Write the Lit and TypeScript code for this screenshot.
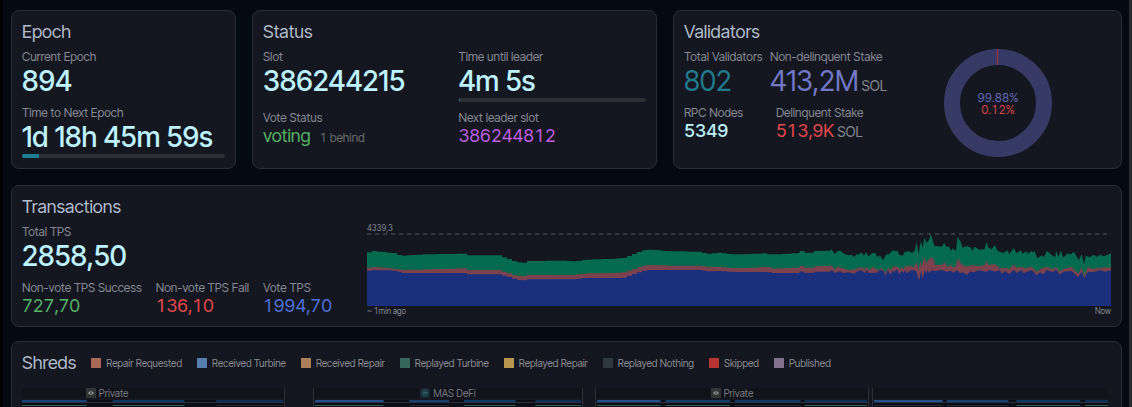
import { LitElement, html, css, svg } from "lit";
import { customElement, property } from "lit/decorators.js";

type Point = [number, number];

/* Upper outlines of the stacked TPS layers on a 2232 x 216 canvas. */
const parse = (text: string): Point[] =>
  text.trim().split(/\s+/).map((p) => p.split(",").map(Number) as Point);

const SUCCESS = parse(`
0,58 17,51 84,57 104,66 179,61 294,59 299,64 397,64 449,83 471,88 477,81 591,80 634,83 644,78 769,73 839,46 909,52
1009,53 1015,59 1054,58 1064,51 1075,60 1119,61 1204,58 1209,62 1269,59 1297,56 1299,51 1311,51 1314,56 1339,56
1342,51 1389,50 1393,45 1403,60 1412,51 1421,51 1431,59 1444,64 1454,62 1461,69 1469,61 1477,61 1483,55 1491,65
1497,53 1504,67 1517,57 1524,56 1532,70 1539,64 1548,78 1559,60 1564,62 1579,48 1586,52 1591,50 1597,62 1607,65
1614,53 1629,52 1634,58 1643,50 1649,25 1655,61 1661,21 1667,41 1672,11 1679,26 1686,18 1691,0 1696,15 1702,35
1724,38 1732,26 1739,40 1745,36 1752,50 1757,43 1767,51 1771,8 1781,23 1787,41 1799,36 1812,41 1815,50 1824,38
1837,47 1853,46 1858,23 1865,41 1874,46 1883,33 1892,51 1909,57 1921,49 1927,60 1940,42 1949,58 1961,49 1967,59
1977,52 1984,59 1994,50 1999,56 2003,50 2011,73 2024,64 2031,70 2039,50 2059,67 2065,68 2067,50 2075,68 2081,49
2089,71 2102,58 2109,62 2121,53 2135,78 2144,61 2152,91 2156,65 2169,70 2179,62 2189,68 2199,62 2211,67 2232,58`);

const FAIL = parse(`
0,103 17,98 89,105 107,108 294,103 299,108 399,108 447,124 469,128 479,122 634,123 641,119 769,116 837,93 919,95
1009,95 1015,99 1059,99 1065,95 1075,101 1119,102 1207,99 1209,104 1296,101 1299,96 1311,96 1313,101 1341,101
1345,97 1389,96 1394,93 1403,107 1412,98 1429,103 1444,109 1464,106 1483,99 1494,107 1497,97 1507,108 1519,99
1534,109 1544,103 1556,115 1564,101 1571,108 1579,97 1594,99 1599,107 1604,99 1609,105 1615,97 1634,95 1639,100
1644,93 1649,83 1655,108 1660,81 1664,96 1672,68 1679,88 1686,75 1692,71 1699,73 1705,93 1724,93 1733,84 1742,99
1752,91 1757,101 1767,95 1771,73 1784,91 1799,98 1815,93 1834,96 1853,93 1858,81 1865,93 1883,90 1899,103 1914,101
1929,105 1940,91 1949,101 1964,99 1974,103 1994,98 2009,113 2024,103 2039,99 2059,106 2067,98 2078,113 2089,105
2114,99 2134,119 2144,100 2152,125 2162,99 2179,105 2199,101 2232,100`);

const VOTE = parse(`
0,111 17,108 89,110 107,117 294,117 299,121 399,121 447,135 469,141 479,136 634,136 641,132 769,132 837,108
1009,108 1015,112 1054,112 1065,108 1075,113 1119,114 1207,114 1209,117 1296,117 1299,112 1311,113 1313,117
1341,116 1344,113 1389,113 1394,108 1404,117 1419,111 1429,118 1444,115 1462,119 1469,113 1483,108 1494,118
1499,108 1505,117 1529,116 1539,108 1549,111 1556,125 1562,108 1570,122 1577,110 1582,114 1589,105 1597,121
1604,111 1609,117 1615,108 1619,118 1634,108 1647,111 1657,139 1662,111 1667,136 1673,108 1677,118 1682,109
1687,118 1694,109 1704,111 1724,108 1739,113 1752,110 1759,116 1771,109 1779,118 1789,115 1799,123 1809,113
1821,115 1834,109 1857,113 1869,108 1884,113 1899,108 1904,120 1914,111 1927,121 1940,107 1949,117 1964,108
1969,118 1994,108 2009,124 2019,115 2029,121 2039,108 2059,115 2067,106 2078,123 2089,113 2114,111 2133,130
2144,113 2152,133 2162,113 2179,115 2199,109 2214,113 2232,109`);

/* Older samples are coarse: they are drawn as steps, the recent ones as a line. */
const STEP = 15;
const STEPS_END = 1290;

const valueAt = (points: Point[], x: number): number => {
  const i = Math.max(1, points.findIndex((p) => p[0] >= x));
  const [x0, y0] = points[i - 1];
  const [x1, y1] = points[i];
  return Math.round(y0 + ((y1 - y0) * (x - x0)) / (x1 - x0));
};

const area = (points: Point[]) => {
  let path = "M0,216";
  for (let x = 0; x < STEPS_END; x += STEP) {
    path += ` V${valueAt(points, x + STEP / 2)} H${x + STEP}`;
  }
  const recent = points.filter((p) => p[0] > STEPS_END);
  return `${path} L${recent.map((p) => p.join(",")).join(" ")} V216 Z`;
};

const LEGEND = [
  ["Repair Requested", "#a9685a"],
  ["Received Turbine", "#557fae"],
  ["Received Repair", "#ab8059"],
  ["Replayed Turbine", "#36685a"],
  ["Replayed Repair", "#b7964e"],
  ["Replayed Nothing", "#2f3742"],
  ["Skipped", "#b63534"],
  ["Published", "#84728d"],
];

interface Lane { start: number; end: number; received: string; replayed: string }
interface Group { start: number; end: number; name: string; kind: string; lanes: Lane[] }

const lane = (start: number, end: number, received: string, replayed: string): Lane => ({ start, end, received, replayed });
const GREEN = "#2f6355";
const GREY = "#252b36";

const GROUPS: Group[] = [
  { start: 0, end: 263, name: "Private", kind: "private", lanes: [
    lane(0, 65, "#16437a", GREEN), lane(91, 163, "#0d3764", GREEN), lane(195, 262, "#0b2f59", GREY)] },
  { start: 291, end: 561, name: "MAS DeFi", kind: "mas", lanes: [
    lane(1, 70, "#22508d", GREEN), lane(96, 136, "#17406f", GREY), lane(151, 203, "#103a69", GREEN), lane(223, 269, "#0b2f59", GREEN)] },
  { start: 573, end: 847, name: "Private", kind: "private", lanes: [
    lane(1, 65, "#22508d", GREEN), lane(70, 135, "#123f72", GREEN), lane(140, 206, "#103a69", GREY), lane(210, 273, "#0b2f59", GREEN)] },
  { start: 850, end: 1086, name: "", kind: "", lanes: [
    lane(1, 70, "#22508d", GREY), lane(74, 136, "#17406f", GREY), lane(144, 208, "#0d3764", GREEN), lane(213, 236, "#0b2f59", GREEN)] },
];

@customElement("stat-item")
export class StatItem extends LitElement {
  @property() label = "";
  @property() value = "";
  @property() tone = "primary";
  @property() size = "large";
  @property() note = "";

  static styles = css`
    :host { display: block; min-width: 0; white-space: nowrap; }
    .label { font-size: 12px; line-height: 16px; color: #868993; }
    .value { display: flex; align-items: baseline; gap: 3px; }
    .large { font-size: 28px; line-height: 32px; }
    .large .primary { font-weight: 500; }
    .small { font-size: 18px; line-height: 20px; font-variant-numeric: tabular-nums; }
    .medium { font-size: 18px; line-height: 20px; font-weight: 500; font-variant-numeric: tabular-nums; }
    .note { font-size: 14px; line-height: 16px; color: #868993; }
    .primary { color: #bdf3ff; }
    .teal { color: #217a8d; }
    .indigo { color: #7277c6; }
    .red { color: #e5484d; }
    .green { color: #55b467; }
    .blue { color: #4f72d9; }
    .purple { color: #bf5fe0; }
    .green + .note { margin-left: 6px; font-size: 12px; color: #686d6c; }
  `;

  render() {
    return html`
      <div class="label">${this.label}</div>
      <div class="value ${this.size}">
        <span class=${this.tone}>${this.value}</span>
        ${this.note ? html`<span class="note">${this.note}</span>` : ""}
      </div>`;
  }
}

@customElement("app-root")
export class AppRoot extends LitElement {
  static styles = css`
    :host {
      display: block;
      box-sizing: border-box;
      height: 100vh;
      overflow: hidden;
      padding: 10px 7px 0 8px;
      border-left: 3px solid #000;
      border-right: 3px solid #292a2b;
      background: #050a12;
      font-family: "Inter Tight", Inter, "Liberation Sans", sans-serif;
      color: #b2bccb;
    }
    .summary { display: grid; grid-template-columns: 225fr 405fr 449fr; gap: 16px; }
    .card {
      box-sizing: border-box;
      min-width: 0;
      padding: 10px;
      border: 1px solid #2b2d35;
      border-radius: 8px;
      background: #14171f;
    }
    .transactions { display: flex; gap: 8px; margin-top: 16px; }
    .shreds { margin-top: 14px; padding-right: 13px; }
    h2 { margin: 0; font-size: 18px; line-height: 22px; font-weight: 400; color: #b2bccb; }
    .stack { display: flex; flex-direction: column; gap: 8px; margin-top: 6px; }
    .halves { display: grid; grid-template-columns: 1fr 1fr; gap: 8px; }
    .row { display: flex; gap: 8px; }
    .first { flex: 0 0 78px; }
    .first-wide { flex: 0 0 84px; }
    .trio { display: flex; gap: 14px; }
    progress {
      display: block;
      box-sizing: border-box;
      width: 100%;
      height: 4px;
      margin-top: 1px;
      border: 0;
      border-radius: 2px;
      overflow: hidden;
      appearance: none;
      background: #2d3133;
    }
    progress::-webkit-progress-bar { background: #2d3133; }
    progress::-webkit-progress-value { background: #1d7e92; }
    .validators { display: flex; }
    .figures { flex: 0 0 61%; }
    .donut { display: block; width: 108px; height: 108px; margin-top: 28px; }
    .donut text { font-size: 12px; text-anchor: middle; font-variant-numeric: tabular-nums; }
    .totals { flex: 0 0 337px; }
    .chart {
      flex: 1;
      min-width: 0;
      display: flex;
      flex-direction: column;
      justify-content: flex-end;
      font-size: 8px;
      line-height: 10px;
      color: #868993;
    }
    .peak { border-bottom: 1px solid transparent; font-variant-numeric: tabular-nums; }
    .plot { display: block; width: 100%; height: 72px; overflow: visible; }
    .axis { display: flex; justify-content: space-between; font-variant-numeric: tabular-nums; }
    .legend-row { display: flex; align-items: center; gap: 15px; }
    .legend { display: flex; gap: 15px; margin: 0; padding: 0; list-style: none; }
    .entry { display: flex; align-items: center; gap: 5px; font-size: 10px; line-height: 16px; color: #8b8d92; white-space: nowrap; }
    .swatch { width: 10px; height: 10px; }
    .strip { display: flex; margin-top: 14px; }
    .group {
      box-sizing: border-box;
      min-width: 0;
      border: solid #2b303b;
      border-width: 0 1px;
    }
    .group:first-child { border-left: 0; }
    .group:last-child { border-right: 0; }
    .group:first-child .owner { padding-right: 35%; }
    .owner {
      display: flex;
      justify-content: center;
      gap: 3px;
      height: 10px;
      margin-bottom: 2px;
      background: #101319;
      font-size: 10px;
      line-height: 11px;
      color: #777980;
    }
    .icon { width: 10px; height: 10px; }
    .lanes { display: block; width: 100%; height: 7px; background: #0b0e16; }
  `;

  private icon(kind: string) {
    if (kind === "private") {
      return html`<svg class="icon" viewBox="0 0 10 10" aria-hidden="true">
        <rect width="10" height="10" fill="#343434" />
        <path d="M2 5Q5 1.6 8 5Q5 8.4 2 5Z" fill="#9a9a9a" />
        <circle cx="5" cy="5" r="1" fill="#444" />
      </svg>`;
    }
    return html`<svg class="icon" viewBox="0 0 10 10" aria-hidden="true">
      <rect width="10" height="10" rx="1" fill="#16262d" />
      <circle cx="5" cy="5" r="3.4" fill="#1d4148" stroke="#285059" stroke-dasharray="1 1" />
      <path d="M3.4 5.6 4.6 4l1.8.4L5.5 6.2" fill="none" stroke="#39717a" stroke-width=".8" />
    </svg>`;
  }

  private group(g: Group, i: number) {
    const width = g.end - g.start;
    const gap = i ? g.start - GROUPS[i - 1].end : 0;
    const total = GROUPS[GROUPS.length - 1].end;
    return html`<div class="group" style="width:${(width / total) * 100}%;margin-left:${(gap / total) * 100}%">
      <div class="owner">${g.name ? html`${this.icon(g.kind)}<span>${g.name}</span>` : ""}</div>
      <svg class="lanes" viewBox="0 0 ${width} 7" preserveAspectRatio="none" aria-hidden="true">
        <rect y="2" width=${width} height="1" fill="#2b303b" />
        ${g.lanes.map((l) => svg`
          <rect x=${l.start} width=${l.end - l.start} height="2" fill=${l.received} />
          <rect x=${l.start} y="5" width=${l.end - l.start} height="1" fill=${l.replayed} />`)}
      </svg>
    </div>`;
  }

  render() {
    return html`
      <div class="summary">
        <section class="card">
          <h2>Epoch</h2>
          <div class="stack">
            <stat-item label="Current Epoch" value="894"></stat-item>
            <div>
              <stat-item label="Time to Next Epoch" value="1d 18h 45m 59s"></stat-item>
              <progress max="100" value="8.4" aria-label="Epoch progress"></progress>
            </div>
          </div>
        </section>
        <section class="card">
          <h2>Status</h2>
          <div class="stack">
            <div class="halves">
              <stat-item label="Slot" value="386244215"></stat-item>
              <div>
                <stat-item label="Time until leader" value="4m 5s"></stat-item>
                <progress max="100" value="1" aria-label="Progress to leader slot"></progress>
              </div>
            </div>
            <div class="halves">
              <stat-item label="Vote Status" value="voting" tone="green" size="small" note="1 behind"></stat-item>
              <stat-item label="Next leader slot" value="386244812" tone="purple" size="small"></stat-item>
            </div>
          </div>
        </section>
        <section class="card validators">
          <div class="figures">
            <h2>Validators</h2>
            <div class="stack">
              <div class="row">
                <stat-item class="first" label="Total Validators" value="802" tone="teal"></stat-item>
                <stat-item label="Non-delinquent Stake" value="413,2M" tone="indigo" note="SOL"></stat-item>
              </div>
              <div class="row">
                <stat-item class="first-wide" label="RPC Nodes" value="5349" size="medium"></stat-item>
                <stat-item label="Delinquent Stake" value="513,9K" tone="red" size="small" note="SOL"></stat-item>
              </div>
            </div>
          </div>
          <svg class="donut" viewBox="0 0 108 108" role="img" aria-label="Stake share">
            <circle cx="54" cy="54" r="46" fill="none" stroke="#373a64" stroke-width="16" />
            <path d="M53.5 0V16" stroke="#a03340" stroke-width="1.2" />
            <text x="54" y="53" fill="#6368b0">99.88%</text>
            <text x="54" y="65" fill="#d4444a">0.12%</text>
          </svg>
        </section>
      </div>

      <section class="card transactions">
        <div class="totals">
          <h2>Transactions</h2>
          <div class="stack">
            <stat-item label="Total TPS" value="2858,50"></stat-item>
            <div class="trio">
              <stat-item label="Non-vote TPS Success" value="727,70" tone="green" size="small"></stat-item>
              <stat-item label="Non-vote TPS Fail" value="136,10" tone="red" size="small"></stat-item>
              <stat-item label="Vote TPS" value="1994,70" tone="blue" size="small"></stat-item>
            </div>
          </div>
        </div>
        <div class="chart">
          <div class="peak">4339,3</div>
          <svg class="plot" viewBox="0 0 2232 216" preserveAspectRatio="none" role="img" aria-label="Transactions per second">
            <path d="M0,0 H2232" stroke="#41444c" stroke-width="4" stroke-dasharray="12 12" />
            <path d=${area(SUCCESS)} fill="#046a50" />
            <path d=${area(FAIL)} fill="#7b414d" />
            <path d=${area(VOTE)} fill="#1a307d" />
          </svg>
          <div class="axis"><span>~ 1min ago</span><span>Now</span></div>
        </div>
      </section>

      <section class="card shreds">
        <div class="legend-row">
          <h2>Shreds</h2>
          <ul class="legend">
            ${LEGEND.map(([name, color]) => html`
              <li class="entry"><span class="swatch" style="background:${color}"></span>${name}</li>`)}
          </ul>
        </div>
        <div class="strip">${GROUPS.map((g, i) => this.group(g, i))}</div>
      </section>
    `;
  }
}
